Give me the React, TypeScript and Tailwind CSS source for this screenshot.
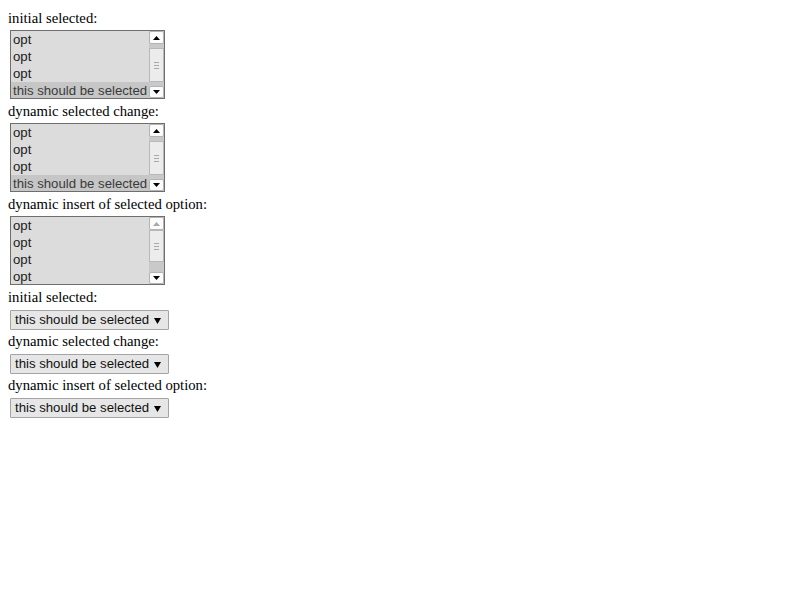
import { FunctionComponent } from "react";

const sans = { fontFamily: '"Liberation Sans", Arial, sans-serif' };

const UpArrow: FunctionComponent<{ color: string }> = ({ color }) => (
  <svg width="7" height="4" viewBox="0 0 7 4">
    <polygon points="3.5,0 7,4 0,4" fill={color} />
  </svg>
);

const DownArrow: FunctionComponent<{ color: string }> = ({ color }) => (
  <svg width="7" height="4" viewBox="0 0 7 4">
    <polygon points="0,0 7,0 3.5,4" fill={color} />
  </svg>
);

const Grip = () => (
  <div className="flex flex-col gap-[2px] items-center">
    <div className="w-[5px] h-px bg-[#a8a8a8]" />
    <div className="w-[5px] h-px bg-[#a8a8a8]" />
    <div className="w-[5px] h-px bg-[#a8a8a8]" />
  </div>
);

interface ListboxProps {
  selectedLast: boolean;
  atTop: boolean;
}

const Listbox: FunctionComponent<ListboxProps> = ({ selectedLast, atTop }) => {
  const rows = ["opt", "opt", "opt", selectedLast ? "this should be selected" : "opt"];
  return (
    <div className="flex w-[155px] h-[69px] border border-[#6e6e6e] bg-[#dcdcdc] mb-[2px] ml-[2px]">
      <div className="flex-1 overflow-hidden text-[13.2px]" style={sans}>
        {rows.map((r, i) => {
          const sel = selectedLast && i === 3;
          return (
            <div
              key={i}
              className={
                "h-[17px] leading-[17px] pl-[2px] whitespace-nowrap " +
                (sel ? "bg-[#c6c6c6] text-[#3a3a3a]" : "text-[#1a1a1a]")
              }
            >
              {r}
            </div>
          );
        })}
      </div>
      <div className="w-[15px] flex flex-col bg-[#c9c9c9]">
        <div className="h-[13px] bg-[#fcfcfc] border border-[#b4b4b4] rounded-[2px] flex items-center justify-center">
          <UpArrow color={atTop ? "#a8a8a8" : "#000"} />
        </div>
        {atTop ? (
          <>
            <div className="h-[32px] bg-[#ececec] border border-[#b8b8b8] flex items-center justify-center">
              <Grip />
            </div>
            <div className="flex-1" />
          </>
        ) : (
          <>
            <div className="h-[4px]" />
            <div className="h-[34px] bg-[#ececec] border border-[#b8b8b8] flex items-center justify-center">
              <Grip />
            </div>
            <div className="flex-1" />
          </>
        )}
        <div className="h-[12px] bg-[#fcfcfc] border border-[#b4b4b4] rounded-[2px] flex items-center justify-center">
          <DownArrow color="#000" />
        </div>
      </div>
    </div>
  );
};

const Dropdown = () => (
  <div
    className="flex items-center w-[159px] h-[20px] mt-[1px] mb-[1px] ml-[2px] border border-[#a4a4a4] bg-[#e6e6e6] rounded-[1px] text-[13.2px] text-[#111] pl-[4px]"
    style={sans}
  >
    <span className="flex-1 whitespace-nowrap">this should be selected</span>
    <span className="w-[15px] flex justify-start pl-[1px]">
      <svg width="7" height="7" viewBox="0 0 7 7">
        <polygon points="0,1 7,1 3.5,7" fill="#000" />
      </svg>
    </span>
  </div>
);

const Label: FunctionComponent<{ text: string }> = ({ text }) => (
  <div className="h-[22px] leading-[20px] pb-[2px] text-[14.7px] text-black whitespace-nowrap">{text}</div>
);

export default function App() {
  return (
    <div
      className="w-[800px] h-[600px] bg-white pt-[8px] pl-[8px] flex flex-col items-start"
      style={{ fontFamily: '"Liberation Serif", "Times New Roman", serif' }}
    >
      <Label text="initial selected:" />
      <Listbox selectedLast atTop={false} />
      <Label text="dynamic selected change:" />
      <Listbox selectedLast atTop={false} />
      <Label text="dynamic insert of selected option:" />
      <Listbox selectedLast={false} atTop />
      <Label text="initial selected:" />
      <Dropdown />
      <Label text="dynamic selected change:" />
      <Dropdown />
      <Label text="dynamic insert of selected option:" />
      <Dropdown />
    </div>
  );
}
